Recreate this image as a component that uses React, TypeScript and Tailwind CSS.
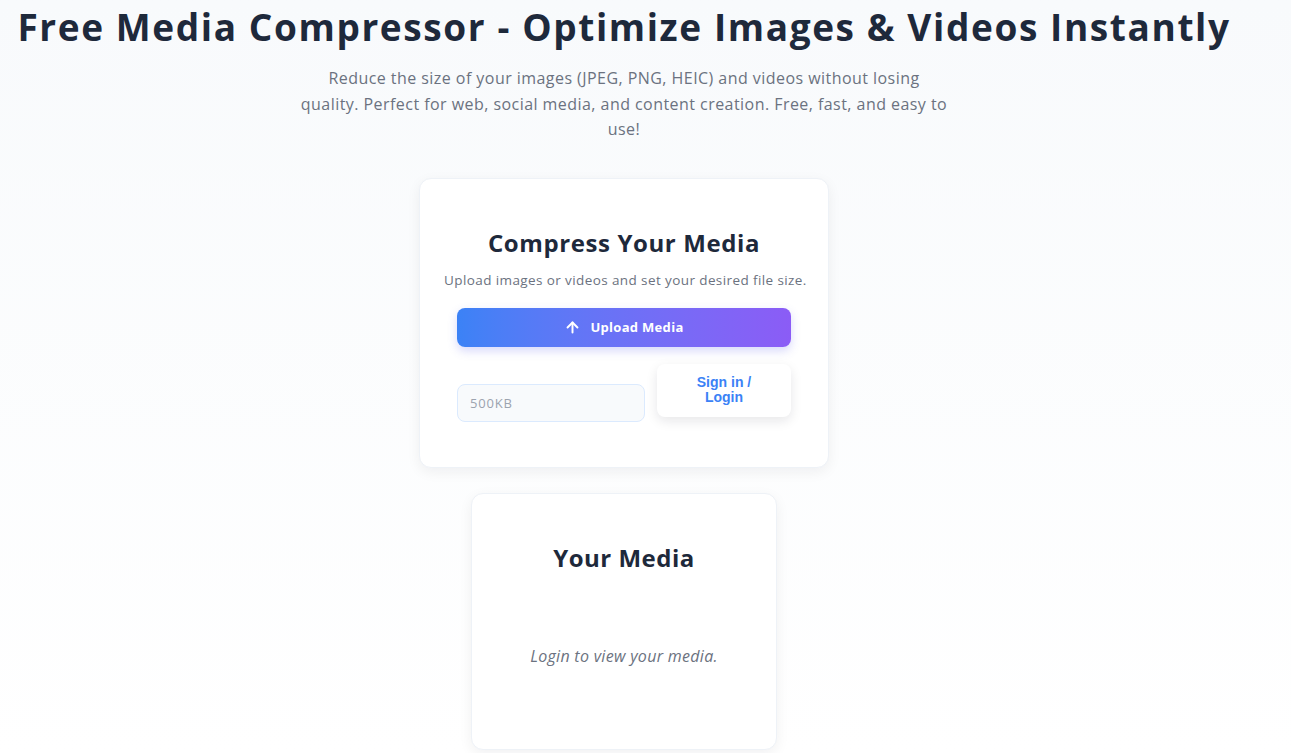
import React from "react";
import { ArrowUp } from "lucide-react";

const App: React.FC = () => {
  return (
    <div
      className="min-h-screen w-full overflow-hidden bg-gradient-to-b from-[#f8fafc] to-white text-[#1e293b]"
      style={{ fontFamily: '"Open Sans", "DejaVu Sans", sans-serif' }}
    >
      <div className="w-[1248px] flex flex-col items-center pb-1">
        {/* Hero */}
        <h1 className="mt-[5px] text-[37px] leading-[44px] font-bold text-[#1e293b] tracking-[1.6px] whitespace-nowrap">
          Free Media Compressor - Optimize Images &amp; Videos Instantly
        </h1>
        <p className="mt-[17px] whitespace-nowrap text-center text-[16px] leading-[25.6px] tracking-[0.45px] text-[#6b7280]">
          Reduce the size of your images (JPEG, PNG, HEIC) and videos without losing
          <br />
          quality. Perfect for web, social media, and content creation. Free, fast, and easy to
          <br />
          use!
        </p>

        {/* Compress card */}
        <div className="mt-[35px] w-[410px] rounded-xl border border-[#eef2f7] bg-white px-[24px] pt-[48px] pb-[45px] shadow-[0_4px_14px_rgba(15,23,42,0.06)]">
          <h2 className="text-center text-[24px] leading-[32px] font-bold tracking-[0.6px] text-[#1e293b]">
            Compress Your Media
          </h2>
          <p className="mt-[11px] whitespace-nowrap text-center text-[13.5px] leading-[20px] tracking-[0.4px] text-[#6b7280]">
            Upload images or videos and set your desired file size.
          </p>
          <div className="mx-[13px]">
            <button className="mt-[18px] flex h-[39px] w-full items-center justify-center gap-[9px] rounded-lg bg-gradient-to-r from-[#3b82f6] to-[#8b5cf6] text-[13px] font-bold tracking-[0.3px] text-white shadow-[0_4px_10px_rgba(99,102,241,0.25)]">
              <ArrowUp size={17} strokeWidth={2.75} />
              Upload Media
            </button>
            <div className="mt-[17px] flex items-start gap-3">
              <input
                placeholder="500KB"
                className="mt-5 h-[38px] w-[188px] rounded-lg border border-[#dbeafe] bg-[#f8fafc] px-3 text-[13px] tracking-[0.8px] text-[#374151] placeholder:text-[#9ca3af] outline-none"
              />
              <button
                className="flex h-[53px] flex-1 items-center justify-center rounded-lg bg-white px-6 text-[14px] leading-[15px] font-bold text-[#3b82f6] shadow-[0_4px_12px_rgba(15,23,42,0.1)]"
                style={{ fontFamily: '"Liberation Sans", Arial, sans-serif' }}
              >
                Sign in /<br />
                Login
              </button>
            </div>
          </div>
        </div>

        {/* Your media card */}
        <div className="mt-[25px] h-[257px] w-[306px] rounded-xl border border-[#eef2f7] bg-white pt-[48px] shadow-[0_4px_14px_rgba(15,23,42,0.06)]">
          <h2 className="text-center text-[24px] leading-[32px] font-bold tracking-[0.5px] text-[#1e293b]">Your Media</h2>
          <p className="mt-[71px] text-center text-[16px] leading-[22px] italic tracking-[0.3px] text-[#6b7280]">
            Login to view your media.
          </p>
        </div>
      </div>
    </div>
  );
};

export default App;
